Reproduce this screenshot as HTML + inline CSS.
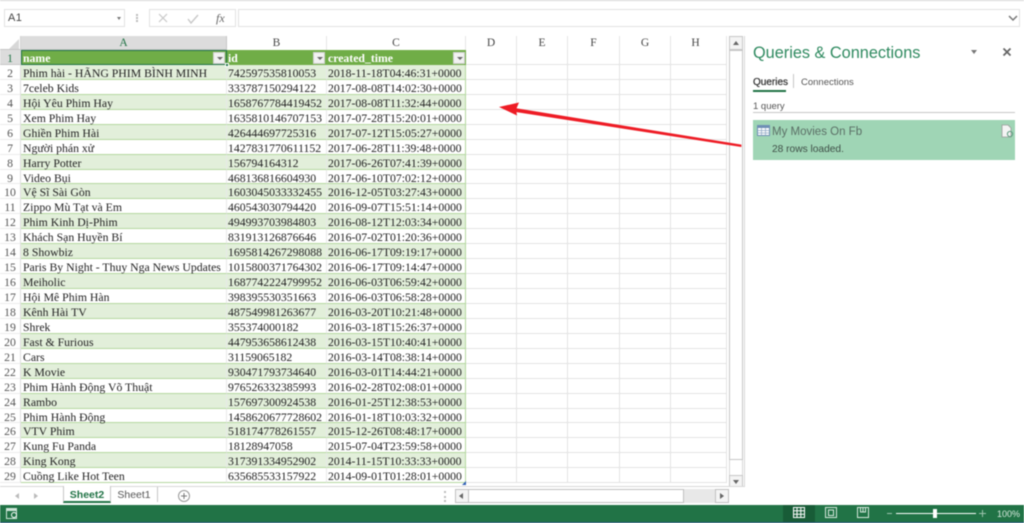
<!DOCTYPE html>
<html><head><meta charset="utf-8"><style>
html{background:#fff}
html,body{margin:0;padding:0;width:1024px;height:523px;overflow:hidden}
*{box-sizing:border-box}
body{font-family:"Liberation Sans",sans-serif;position:relative;background:#fff;filter:blur(.4px)}
.a{position:absolute}
.box{position:absolute;border:1px solid #e2e2e2;background:#fff}
.ch{position:absolute;top:36px;height:14px;font:11.5px/15px "Liberation Serif",serif;color:#444;text-align:center;border-right:1px solid #e6e6e6;background:#fff}
#rows{position:absolute;left:0;top:50px;width:727px;isolation:isolate}
.r{position:relative;height:14.95px;width:727px}
.r::before{content:"";position:absolute;left:21px;top:0;width:445px;height:100%;z-index:0}
.g::before{background:#e2efda}
.h::before{background:#70ad47}
.r>*{position:absolute;z-index:1;top:0;height:100%;white-space:nowrap;font:11.75px/17px "Liberation Serif",serif;color:#222;overflow:visible}
.r i{left:0;width:21px;text-align:center;font-style:normal;color:#555;background:#fff;border-right:1px solid #dedede;border-bottom:1px solid #ececec}
.r b{left:21px;width:206px;padding-left:2px;font-weight:400;border-right:1px solid #e8e8e8;border-bottom:1px solid #b5d8a0}
.r u{left:227px;width:100px;padding-left:1px;text-decoration:none;border-right:1px solid #e8e8e8;border-bottom:1px solid #b5d8a0}
.r s{left:327px;width:139px;padding-left:1px;text-decoration:none;border-right:1px solid #b5d8a0;border-bottom:1px solid #b5d8a0}
.r em{font-style:normal;width:52px;border-right:1px solid #e4e4e4;border-bottom:1px solid #e4e4e4}
.r em:nth-of-type(1){left:466px;width:51px}.r em:nth-of-type(2){left:517px;width:51px}.r em:nth-of-type(3){left:568px;width:52px}.r em:nth-of-type(4){left:620px;width:51px}.r em:nth-of-type(5){left:671px;width:56px}
.h b,.h u,.h s{color:#fff;font-weight:700;border-bottom:1px solid #70ad47;border-right:0}
.h i{color:#217346;background:#dcdcdc;border-bottom:1px solid #c6c6c6}
.dd{position:absolute;top:52px;width:12px;height:12px;background:#f2f2f2;border:1px solid #d0d0d0}
.dd:after{content:"";position:absolute;left:2.5px;top:4px;border-left:3px solid transparent;border-right:3px solid transparent;border-top:3px solid #666}
</style></head><body>
<div class="a" style="left:0;top:0;width:1024px;height:1px;background:#d6d6d6"></div>

<div class="box" style="left:4px;top:9px;width:121px;height:18px;font-size:11px;line-height:16px;color:#444;padding-left:3px;letter-spacing:.4px">A1</div>
<div class="a" style="left:117px;top:17px;border-left:2.5px solid transparent;border-right:2.5px solid transparent;border-top:3px solid #777"></div>
<div class="a" style="left:136px;top:14px;width:2px;height:8px;border-left:2px dotted #bbb"></div>
<div class="box" style="left:149px;top:9px;width:87px;height:18px"></div>
<svg class="a" style="left:155px;top:11px" width="80" height="15"><path d="M4 3l8 8M12 3l-8 8" stroke="#c8c8c8" stroke-width="1.2" fill="none"/><path d="M33 8l3 4 7-8" stroke="#c8c8c8" stroke-width="1.4" fill="none"/><text x="61" y="11" font-family="Liberation Serif,serif" font-style="italic" font-size="12" fill="#666">fx</text></svg>
<div class="box" style="left:238px;top:9px;width:782px;height:18px"></div>
<svg class="a" style="left:1008px;top:15px" width="10" height="7"><path d="M1 1l4 4 4-4" stroke="#777" stroke-width="1.5" fill="none"/></svg>

<div class="a" style="left:0;top:36px;width:21px;height:14px;background:#fff;border-right:1px solid #d4d4d4;border-bottom:1px solid #c6c6c6"></div>
<div class="a" style="left:9px;top:39px;width:0;height:0;border-left:10px solid transparent;border-bottom:10px solid #d8d8d8"></div>
<div class="ch" style="left:21px;width:206px;background:#dcdcdc;color:#217346;border-right-color:#c6c6c6;border-bottom:1px solid #c6c6c6">A</div>
<div class="ch" style="left:227px;width:100px">B</div>
<div class="ch" style="left:327px;width:139px">C</div>
<div class="ch" style="left:466px;width:51px">D</div>
<div class="ch" style="left:517px;width:51px">E</div>
<div class="ch" style="left:568px;width:52px">F</div>
<div class="ch" style="left:620px;width:51px">G</div>
<div class="ch" style="left:671px;width:56px;padding-right:6px">H</div>

<div id="rows">
<div class="r h"><i>1</i><b>name</b><u>id</u><s>created_time</s><em></em><em></em><em></em><em></em><em></em></div>
<div class="r g"><i>2</i><b>Phim hài - HÃNG PHIM BÌNH MINH</b><u>742597535810053</u><s>2018-11-18T04:46:31+0000</s><em></em><em></em><em></em><em></em><em></em></div>
<div class="r"><i>3</i><b>7celeb Kids</b><u>333787150294122</u><s>2017-08-08T14:02:30+0000</s><em></em><em></em><em></em><em></em><em></em></div>
<div class="r g"><i>4</i><b>Hội Yêu Phim Hay</b><u>1658767784419452</u><s>2017-08-08T11:32:44+0000</s><em></em><em></em><em></em><em></em><em></em></div>
<div class="r"><i>5</i><b>Xem Phim Hay</b><u>1635810146707153</u><s>2017-07-28T15:20:01+0000</s><em></em><em></em><em></em><em></em><em></em></div>
<div class="r g"><i>6</i><b>Ghiền Phim Hài</b><u>426444697725316</u><s>2017-07-12T15:05:27+0000</s><em></em><em></em><em></em><em></em><em></em></div>
<div class="r"><i>7</i><b>Người phán xử</b><u>1427831770611152</u><s>2017-06-28T11:39:48+0000</s><em></em><em></em><em></em><em></em><em></em></div>
<div class="r g"><i>8</i><b>Harry Potter</b><u>156794164312</u><s>2017-06-26T07:41:39+0000</s><em></em><em></em><em></em><em></em><em></em></div>
<div class="r"><i>9</i><b>Video Bụi</b><u>468136816604930</u><s>2017-06-10T07:02:12+0000</s><em></em><em></em><em></em><em></em><em></em></div>
<div class="r g"><i>10</i><b>Vệ Sĩ Sài Gòn</b><u>1603045033332455</u><s>2016-12-05T03:27:43+0000</s><em></em><em></em><em></em><em></em><em></em></div>
<div class="r"><i>11</i><b>Zippo Mù Tạt và Em</b><u>460543030794420</u><s>2016-09-07T15:51:14+0000</s><em></em><em></em><em></em><em></em><em></em></div>
<div class="r g"><i>12</i><b>Phim Kinh Dị-Phim</b><u>494993703984803</u><s>2016-08-12T12:03:34+0000</s><em></em><em></em><em></em><em></em><em></em></div>
<div class="r"><i>13</i><b>Khách Sạn Huyền Bí</b><u>831913126876646</u><s>2016-07-02T01:20:36+0000</s><em></em><em></em><em></em><em></em><em></em></div>
<div class="r g"><i>14</i><b>8 Showbiz</b><u>1695814267298088</u><s>2016-06-17T09:19:17+0000</s><em></em><em></em><em></em><em></em><em></em></div>
<div class="r"><i>15</i><b>Paris By Night - Thuy Nga News Updates</b><u>1015800371764302</u><s>2016-06-17T09:14:47+0000</s><em></em><em></em><em></em><em></em><em></em></div>
<div class="r g"><i>16</i><b>Meiholic</b><u>1687742224799952</u><s>2016-06-03T06:59:42+0000</s><em></em><em></em><em></em><em></em><em></em></div>
<div class="r"><i>17</i><b>Hội Mê Phim Hàn</b><u>398395530351663</u><s>2016-06-03T06:58:28+0000</s><em></em><em></em><em></em><em></em><em></em></div>
<div class="r g"><i>18</i><b>Kênh Hài TV</b><u>487549981263677</u><s>2016-03-20T10:21:48+0000</s><em></em><em></em><em></em><em></em><em></em></div>
<div class="r"><i>19</i><b>Shrek</b><u>355374000182</u><s>2016-03-18T15:26:37+0000</s><em></em><em></em><em></em><em></em><em></em></div>
<div class="r g"><i>20</i><b>Fast &amp; Furious</b><u>447953658612438</u><s>2016-03-15T10:40:41+0000</s><em></em><em></em><em></em><em></em><em></em></div>
<div class="r"><i>21</i><b>Cars</b><u>31159065182</u><s>2016-03-14T08:38:14+0000</s><em></em><em></em><em></em><em></em><em></em></div>
<div class="r g"><i>22</i><b>K Movie</b><u>930471793734640</u><s>2016-03-01T14:44:21+0000</s><em></em><em></em><em></em><em></em><em></em></div>
<div class="r"><i>23</i><b>Phim Hành Động Võ Thuật</b><u>976526332385993</u><s>2016-02-28T02:08:01+0000</s><em></em><em></em><em></em><em></em><em></em></div>
<div class="r g"><i>24</i><b>Rambo</b><u>157697300924538</u><s>2016-01-25T12:38:53+0000</s><em></em><em></em><em></em><em></em><em></em></div>
<div class="r"><i>25</i><b>Phim Hành Động</b><u>1458620677728602</u><s>2016-01-18T10:03:32+0000</s><em></em><em></em><em></em><em></em><em></em></div>
<div class="r g"><i>26</i><b>VTV Phim</b><u>518174778261557</u><s>2015-12-26T08:48:17+0000</s><em></em><em></em><em></em><em></em><em></em></div>
<div class="r"><i>27</i><b>Kung Fu Panda</b><u>18128947058</u><s>2015-07-04T23:59:58+0000</s><em></em><em></em><em></em><em></em><em></em></div>
<div class="r g"><i>28</i><b>King Kong</b><u>317391334952902</u><s>2014-11-15T10:33:33+0000</s><em></em><em></em><em></em><em></em><em></em></div>
<div class="r"><i>29</i><b>Cuồng Like Hot Teen</b><u>635685533157922</u><s>2014-09-01T01:28:01+0000</s><em></em><em></em><em></em><em></em><em></em></div>
</div>

<div class="a" style="left:21px;top:50px;width:206px;height:15px;border:1px solid #217346"></div>
<div class="a" style="left:225px;top:63px;width:4px;height:4px;background:#217346;border:1px solid #fff"></div>
<div class="dd" style="left:213px"></div>
<div class="dd" style="left:313px"></div>
<div class="dd" style="left:453px"></div>
<div class="a" style="left:462px;top:481px;border-left:4px solid transparent;border-bottom:4px solid #2f5fb5"></div>

<!-- vertical scrollbar -->
<div class="a" style="left:729px;top:36px;width:14px;height:452px;background:#fff;border-left:1px solid #d8d8d8;border-right:1px solid #d8d8d8"></div>
<div class="a" style="left:729px;top:36px;width:14px;height:14px;background:#f4f4f4;border:1px solid #c6c6c6"></div>
<div class="a" style="left:733px;top:41px;border-left:3px solid transparent;border-right:3px solid transparent;border-bottom:4px solid #666"></div>
<div class="a" style="left:729px;top:50px;width:14px;height:410px;background:#fff;border:1px solid #c6c6c6"></div>
<div class="a" style="left:729px;top:475px;width:14px;height:13px;background:#f4f4f4;border:1px solid #c6c6c6"></div>
<div class="a" style="left:733px;top:480px;border-left:3px solid transparent;border-right:3px solid transparent;border-top:4px solid #666"></div>
<div class="a" style="left:744px;top:36px;width:1px;height:469px;background:#d8d8d8"></div>

<!-- task pane -->
<div class="a" style="left:753px;top:43px;font-size:16.3px;line-height:20px;color:#2f8a60;white-space:nowrap">Queries &amp; Connections</div>
<div class="a" style="left:971px;top:50px;border-left:3.5px solid transparent;border-right:3.5px solid transparent;border-top:4px solid #777"></div>
<svg class="a" style="left:1002px;top:47px" width="10" height="10"><path d="M1.5 1.5l7 7M8.5 1.5l-7 7" stroke="#666" stroke-width="1.8" fill="none"/></svg>
<div class="a" style="left:753px;top:76px;font-size:10px;line-height:13px;color:#333;-webkit-text-stroke:.25px #333">Queries</div>
<div class="a" style="left:793px;top:74px;width:1px;height:14px;background:#c6c6c6"></div>
<div class="a" style="left:801px;top:76px;font-size:9.5px;line-height:13px;color:#555">Connections</div>
<div class="a" style="left:753px;top:90px;width:33px;height:2px;background:#217346"></div>
<div class="a" style="left:753px;top:100px;font-size:9.5px;line-height:13px;color:#555">1 query</div>
<div class="a" style="left:753px;top:112px;width:262px;height:1px;background:#c6c6c6"></div>
<div class="a" style="left:753px;top:120px;width:262px;height:40px;background:#9fd5b5"></div>
<svg class="a" style="left:757px;top:125px" width="13" height="12"><rect x=".5" y=".5" width="12" height="10" fill="#fff" stroke="#6f8fb5"/><rect x=".5" y=".5" width="12" height="2.5" fill="#6f8fb5"/><path d="M.5 5.5h12M.5 8h12M4.500 3v7.500M8.500 3v7.500" stroke="#8aa4c4" stroke-width=".7" fill="none"/></svg>
<div class="a" style="left:772px;top:125px;font-size:11.5px;line-height:15px;color:#5b6f66;white-space:nowrap">My Movies On Fb</div>
<div class="a" style="left:772px;top:143px;font-size:10.2px;line-height:13px;color:#3f4f47;white-space:nowrap">28 rows loaded.</div>
<svg class="a" style="left:1001px;top:124px" width="13" height="14"><path d="M1 1h6l3 3v9H1z" fill="#f4f4f4" stroke="#9a9a9a" stroke-width=".8"/><circle cx="9" cy="10" r="2.6" fill="none" stroke="#5e9c80" stroke-width="1"/></svg>

<!-- arrow -->
<svg class="a" style="left:0;top:0" width="1024" height="523"><path d="M741 146.500L741 145L512 108L512 111Z" fill="#ee1c25" stroke="#ee1c25" stroke-width=".8"/><path d="M499 107L519 102.500L516 109.500L517 115.500Z" fill="#ee1c25"/></svg>

<!-- sheet tabs -->
<div class="a" style="left:0;top:486px;width:745px;height:19px;background:#fff;border-top:1px solid #d8d8d8"></div>
<div class="a" style="left:15px;top:493px;border-top:3px solid transparent;border-bottom:3px solid transparent;border-right:4px solid #bbb"></div>
<div class="a" style="left:34px;top:493px;border-top:3px solid transparent;border-bottom:3px solid transparent;border-left:4px solid #bbb"></div>
<div class="a" style="left:63px;top:486px;width:48px;height:17px;background:#fff;border-left:1px solid #c6c6c6;border-right:1px solid #c6c6c6;border-bottom:2px solid #217346;font-size:10.5px;line-height:18px;font-weight:700;color:#217346;text-align:center">Sheet2</div>
<div class="a" style="left:111px;top:487px;width:47px;height:15px;border-right:1px solid #c6c6c6;font-size:10.5px;line-height:17px;color:#555;text-align:center">Sheet1</div>
<svg class="a" style="left:177px;top:489px" width="14" height="14"><circle cx="7" cy="7" r="5.5" fill="#fff" stroke="#999"/><path d="M7 4v6M4 7h6" stroke="#777"/></svg>
<div class="a" style="left:444px;top:491px;width:2px;height:11px;border-left:2px dotted #bbb"></div>
<div class="a" style="left:455px;top:489px;width:274px;height:14px;background:#e8e8e8"></div>
<div class="a" style="left:455px;top:489px;width:14px;height:14px;background:#f4f4f4;border:1px solid #c0c0c0"></div>
<div class="a" style="left:459px;top:493px;border-top:3px solid transparent;border-bottom:3px solid transparent;border-right:4px solid #666"></div>
<div class="a" style="left:468px;top:489px;width:216px;height:14px;background:#fff;border:1px solid #c0c0c0"></div>
<div class="a" style="left:715px;top:489px;width:14px;height:14px;background:#f4f4f4;border:1px solid #c0c0c0"></div>
<div class="a" style="left:720px;top:493px;border-top:3px solid transparent;border-bottom:3px solid transparent;border-left:4px solid #666"></div>

<!-- status bar -->
<div class="a" style="left:0;top:505px;width:1024px;height:18px;background:#217346"></div>
<div class="a" style="left:0;top:522px;width:1024px;height:1px;background:#1c4e6e"></div>
<svg class="a" style="left:5px;top:507px" width="14" height="13"><rect x="1" y="1" width="11" height="2" fill="#cfe5d8"/><rect x="1.500" y="3.500" width="10" height="8" fill="none" stroke="#cfe5d8"/><circle cx="9" cy="8" r="2.500" fill="#217346" stroke="#fff"/></svg>
<div class="a" style="left:783px;top:505px;width:32px;height:17px;background:#185c37"></div>
<svg class="a" style="left:790px;top:505px" width="230" height="17">
<g fill="none" stroke="#fff" stroke-width="1"><rect x="3.500" y="2.500" width="11" height="10"/><path d="M3.500 5.800h11M3.500 9.200h11M7 2.500v10M10.800 2.500v10"/></g>
<g fill="none" stroke="#d5e8dc" stroke-width="1"><rect x="35.500" y="2.500" width="11" height="10"/><rect x="38.500" y="5" width="5" height="5.500"/></g>
<g fill="none" stroke="#d5e8dc" stroke-width="1"><rect x="67.500" y="2.500" width="11" height="10"/><path d="M70.500 2.500v4.500h5v-4.500M73 2.500v4.500"/></g>
<path d="M97 8.500h5" stroke="#9cc4ad"/>
<path d="M106 8.500h80" stroke="#fff"/>
<rect x="143" y="4" width="4" height="9" fill="#fff"/>
<path d="M189 8.500h7M192.500 5v7" stroke="#9cc4ad"/>
</svg>
<div class="a" style="left:997px;top:508px;font-size:9px;line-height:12px;color:#d5e8dc">100%</div>
</body></html>
